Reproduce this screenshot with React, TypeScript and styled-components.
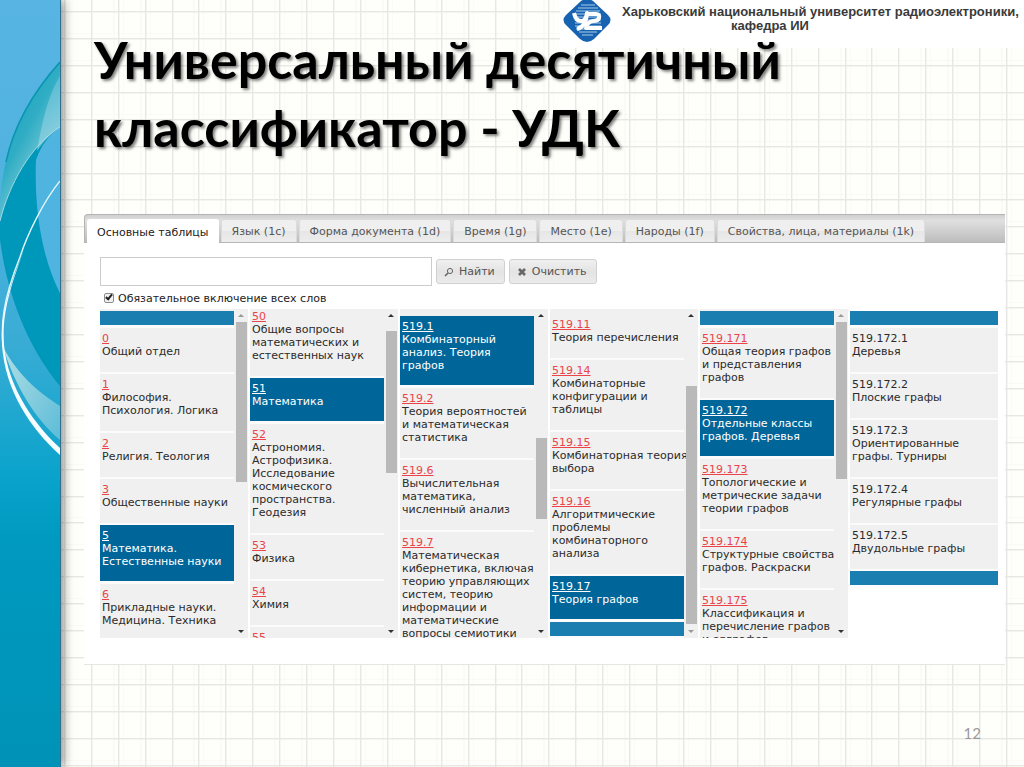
import React from "react";
import styled, { createGlobalStyle } from "styled-components";

const uiFont = `"DejaVu Sans", Verdana, sans-serif`;
const titleFont = `Lato, Carlito, "Open Sans", sans-serif`;

const GlobalStyle = createGlobalStyle`
  *, *::before, *::after { box-sizing: border-box; }
  body { margin: 0; background: #fefefa; }
`;

const Slide = styled.div`
  position: relative;
  display: grid;
  grid-template-columns: 61px minmax(0, 1fr);
  min-height: 100vh;
  overflow: hidden;
`;

const GridPaper = styled.svg`
  position: absolute;
  inset: 0;
  width: 100%;
  height: 100%;
`;

const Ribbon = styled.aside`
  position: relative;
  background: linear-gradient(#58b5e3 0%, #50b2df 25%, #38acd5 45%, #0aa3cb 62%, #0099c0 70%, #0093b7 100%);
  border-right: 1px solid #31708c;
  box-shadow: 2px 0 10px rgba(60, 60, 60, 0.65);
`;

const Waves = styled.svg`
  display: block;
  width: 60px;
  height: 767px;
`;

const Main = styled.main`
  position: relative;
  display: flex;
  flex-direction: column;
  padding: 25px 19px 20px 23px;
`;

const University = styled.header`
  position: absolute;
  top: 0;
  right: 0;
  display: flex;
  gap: 10px;
  width: 464px;
  height: 48px;
  padding-left: 2px;
  background: #fff;
  font: 700 13px/14px "Liberation Sans", Arial, sans-serif;
  color: #3a3a3a;
`;

const Logo = styled.svg`
  flex: none;
  width: 50px;
  height: 44px;
`;

const UniversityName = styled.p`
  margin: 5px 0 0;
  white-space: nowrap;
`;

const Department = styled.span`
  display: block;
  padding-left: 109px;
`;

const Title = styled.h1`
  position: relative;
  margin: 0 0 53px 10px;
  font: 700 52px/68px ${titleFont};
  color: #000;
  text-shadow: 2px 2px 3px rgba(0, 0, 0, 0.5);
`;

const Panel = styled.section`
  background: #fff;
  border-bottom: 1px solid #e6e5e0;
  font: 11px/13px ${uiFont};
  color: #333;
`;

const TabBar = styled.div`
  display: flex;
  gap: 2px;
  height: 29px;
  padding: 4px 0 0 2px;
  background: linear-gradient(#cfcfcf, #e0e0e0 20%, #bdbdbd);
  border: solid #b5b5b5;
  border-width: 1px 0 1px 1px;
  border-top-left-radius: 4px;
`;

const Tab = styled.button<{ $active?: boolean }>`
  height: ${(p) => (p.$active ? 25 : 23)}px;
  padding: 0 ${(p) => (p.$active ? 9 : 10)}px;
  border: 1px solid ${(p) => (p.$active ? "#fff" : "#dcdcdc")};
  border-bottom: 0;
  border-radius: 3px 3px 0 0;
  background: ${(p) => (p.$active ? "#fff" : "linear-gradient(#efefef 50%, #e6e6e6 50%, #ededed)")};
  font: inherit;
  white-space: nowrap;
  color: ${(p) => (p.$active ? "#222" : "#555")};
`;

const TabBody = styled.div`
  padding: 14px 7px 26px 16px;
`;

const SearchRow = styled.form`
  display: flex;
  align-items: center;
  gap: 4px;
`;

const SearchInput = styled.input`
  width: 332px;
  height: 29px;
  padding: 0 6px;
  border: 1px solid #ccc;
  background: #fff;
  font: inherit;
`;

const ActionButton = styled.button`
  display: flex;
  align-items: center;
  gap: 5px;
  height: 25px;
  padding: 0 9px 0 7px;
  border: 1px solid #d0d0d0;
  border-radius: 3px;
  background: linear-gradient(#f0f0f0, #e4e4e4 50%, #ebebeb);
  font: inherit;
  color: #555;
`;

const ButtonIcon = styled.svg`
  width: 10px;
  height: 10px;
`;

const CheckLabel = styled.label`
  display: flex;
  align-items: center;
  gap: 4px;
  height: 23px;
  padding: 2px 0 0 4px;
  color: #222;
`;

const Checkbox = styled.input`
  appearance: none;
  width: 10px;
  height: 10px;
  margin: 0 0 2px;
  border: 1px solid #8c8c8c;
  border-radius: 2px;
  background: #f2f2f2;
  &:checked::after {
    content: "";
    display: block;
    width: 4px;
    height: 7px;
    margin: -1px 0 0 2px;
    border: solid #222;
    border-width: 0 2px 2px 0;
    transform: rotate(40deg);
  }
`;

const Columns = styled.div`
  display: grid;
  grid-template-columns: repeat(6, minmax(0, 1fr));
  gap: 2px;
  height: 329px;
`;

const Column = styled.div<{ $plain?: boolean }>`
  display: flex;
  height: 329px;
  overflow: hidden;
  background: ${(p) => (p.$plain ? "#fff" : "#f0f0f0")};
`;

const List = styled.ul<{ $start: number }>`
  flex: 1;
  min-width: 0;
  margin: ${(p) => p.$start}px 0 0;
  padding: 0;
  list-style: none;
`;

const Edge = styled.li`
  height: 17px;
  background: #1a7eb0;
  border-bottom: 3px solid #fbfbfb;
`;

const Item = styled.li<{ $selected?: boolean }>`
  padding: 4px 0 ${(p) => (p.$selected ? 13 : 14)}px 2px;
  border-bottom: ${(p) => (p.$selected ? 3 : 2)}px solid #fbfbfb;
  background: ${(p) => (p.$selected ? "#069" : "#f0f0f0")};
  color: ${(p) => (p.$selected ? "#fff" : "#2b2b2b")};
`;

const Code = styled.a<{ $selected?: boolean }>`
  color: ${(p) => (p.$selected ? "#fff" : "#ea4448")};
`;

const Name = styled.span`
  display: block;
  white-space: pre;
`;

const Scrollbar = styled.div`
  flex: none;
  display: flex;
  flex-direction: column;
  justify-content: space-between;
  align-items: center;
  width: 14px;
  padding: 5px 0;
`;

const Arrow = styled.svg`
  flex: none;
  width: 6px;
  height: 3px;
`;

const Track = styled.div`
  flex: 1;
  width: 11px;
  margin: 5px 0 4px;
`;

const Thumb = styled.div<{ $top: number; $size: number }>`
  height: ${(p) => p.$size}px;
  margin-top: ${(p) => p.$top}px;
  background: #b9b9b9;
`;

const PageNumber = styled.footer`
  margin-top: 58px;
  padding-right: 24px;
  font: 15px/20px ${titleFont};
  text-align: right;
  color: #999;
`;

type Entry = { code: string; name: string; selected?: boolean; leaf?: boolean };
type ColumnData = {
  start: number;
  first?: boolean;
  last?: boolean;
  thumb?: [number, number];
  items: Entry[];
};

const columns: ColumnData[] = [
  {
    start: 2,
    first: true,
    thumb: [0, 160],
    items: [
      { code: "0", name: "Общий отдел" },
      { code: "1", name: "Философия.\nПсихология. Логика" },
      { code: "2", name: "Религия. Теология" },
      { code: "3", name: "Общественные науки" },
      { code: "5", name: "Математика.\nЕстественные науки", selected: true },
      { code: "6", name: "Прикладные науки.\nМедицина. Техника" },
    ],
  },
  {
    start: -3,
    thumb: [9, 142],
    items: [
      { code: "50", name: "Общие вопросы\nматематических и\nестественных наук" },
      { code: "51", name: "Математика", selected: true },
      { code: "52", name: "Астрономия.\nАстрофизика.\nИсследование\nкосмического\nпространства.\nГеодезия" },
      { code: "53", name: "Физика" },
      { code: "54", name: "Химия" },
      { code: "55", name: "Науки о Земле" },
    ],
  },
  {
    start: 7,
    thumb: [116, 81],
    items: [
      { code: "519.1", name: "Комбинаторный\nанализ. Теория\nграфов", selected: true },
      { code: "519.2", name: "Теория вероятностей\nи математическая\nстатистика" },
      { code: "519.6", name: "Вычислительная\nматематика,\nчисленный анализ" },
      { code: "519.7", name: "Математическая\nкибернетика, включая\nтеорию управляющих\nсистем, теорию\nинформации и\nматематические\nвопросы семиотики" },
    ],
  },
  {
    start: 5,
    last: true,
    thumb: [64, 238],
    items: [
      { code: "519.11", name: "Теория перечисления" },
      { code: "519.14", name: "Комбинаторные\nконфигурации и\nтаблицы" },
      { code: "519.15", name: "Комбинаторная теория\nвыбора" },
      { code: "519.16", name: "Алгоритмические\nпроблемы\nкомбинаторного\nанализа" },
      { code: "519.17", name: "Теория графов", selected: true },
    ],
  },
  {
    start: 2,
    first: true,
    thumb: [0, 157],
    items: [
      { code: "519.171", name: "Общая теория графов\nи представления\nграфов" },
      { code: "519.172", name: "Отдельные классы\nграфов. Деревья", selected: true },
      { code: "519.173", name: "Топологические и\nметрические задачи\nтеории графов" },
      { code: "519.174", name: "Структурные свойства\nграфов. Раскраски" },
      { code: "519.175", name: "Классификация и\nперечисление графов\nи орграфов" },
    ],
  },
  {
    start: 2,
    first: true,
    last: true,
    items: [
      { code: "519.172.1", name: "Деревья", leaf: true },
      { code: "519.172.2", name: "Плоские графы", leaf: true },
      { code: "519.172.3", name: "Ориентированные\nграфы. Турниры", leaf: true },
      { code: "519.172.4", name: "Регулярные графы", leaf: true },
      { code: "519.172.5", name: "Двудольные графы", leaf: true },
    ],
  },
];

const tabs = [
  "Основные таблицы",
  "Язык (1c)",
  "Форма документа (1d)",
  "Время (1g)",
  "Место (1e)",
  "Народы (1f)",
  "Свойства, лица, материалы (1k)",
];

const CELL = 26.92;
const steps = Array.from({ length: 90 }, (_, i) => i);

function Paper() {
  return (
    <GridPaper aria-hidden="true">
      {steps.map((i) => {
        const x = Math.round(10 + i * CELL);
        const y = Math.round(11 + i * CELL);
        return (
          <g key={i} fill="#e7e7e3">
            <rect x={x} y="0" width="1" height="100%" />
            <rect x="0" y={y} width="100%" height="1" />
            <rect x={x + 1} y="0" width="1" height="100%" opacity="0.4" />
            <rect x="0" y={y + 1} width="100%" height="1" opacity="0.4" />
            {i % 3 !== 0 && (
              <g opacity="0.16">
                <rect x={x - 5} y="0" width="2" height="100%" />
                <rect x={x + 5} y="0" width="1" height="100%" />
                <rect x="0" y={y - 5} width="100%" height="1" />
              </g>
            )}
          </g>
        );
      })}
    </GridPaper>
  );
}

function RibbonArt() {
  return (
    <Waves viewBox="0 0 60 767" aria-hidden="true">
      <defs>
        <linearGradient id="leaf" x1="0" y1="0" x2="0.7" y2="1">
          <stop offset="0" stopColor="#0d9fbd" />
          <stop offset="0.5" stopColor="#30adc4" />
          <stop offset="1" stopColor="#b5e0e6" />
        </linearGradient>
        <linearGradient id="pale" x1="0" y1="0" x2="0" y2="1">
          <stop offset="0" stopColor="#6fc3dc" />
          <stop offset="1" stopColor="#9bd6e4" />
        </linearGradient>
        <linearGradient id="fin" x1="0" y1="0" x2="1" y2="1">
          <stop offset="0" stopColor="#b2dfe5" />
          <stop offset="1" stopColor="#5cbcd8" />
        </linearGradient>
      </defs>
      <path d="M60 127C32 142 12 172 0 222V240C8 300 30 350 60 386V293C45 260 35 215 36 160Z" fill="#0098ba" />
      <path d="M36 160C34 210 42 258 60 293V127C50 134 41 145 36 160Z" fill="#4fb4df" />
      <path d="M60 62C34 91 14 124 5 165C1 185 0 200 0 220C9 185 30 146 60 127Z" fill="url(#leaf)" />
      <path d="M60 76C47 98 43 120 37 151C44 141 52 132 60 127Z" fill="url(#pale)" opacity="0.65" />
      <path d="M60 62C34 91 14 124 6 162" fill="none" stroke="#0795b0" strokeWidth="1.5" />
      <path d="M0 221C9 185 30 146 60 127" fill="none" stroke="#b9e5eb" strokeWidth="0.8" />
      <path d="M3 347C18 375 38 392 60 406V440C35 419 15 386 3 347Z" fill="url(#fin)" />
      <path d="M60 181C43 202 27 235 20 257C2 302 1 326 3 347" fill="none" stroke="#e2f7fb" strokeWidth="1.4" />
      <path d="M24 250C6 294 1 318 2 345C5 390 30 428 60 455V448C35 425 8 388 4 345C2 318 8 292 24 250Z" fill="#f6fdff" />
    </Waves>
  );
}

function UniversityLogo() {
  return (
    <Logo viewBox="0 0 50 44" role="img" aria-label="ХНУРЭ">
      <path d="M19 1Q25 -3 31 1L46 15Q51 20 46 25L32 39Q25 45 18 39L4 25Q-1 20 4 15Z" fill="#1763b1" />
      <g stroke="#a9cdec" strokeWidth="1.2">
        <path d="M19 5H33M16 8H36M14 11H38M13 14H39M13 17H39M13 20H39M13 23H39M13 26H39M14 29H38M17 32H35M20 35H31" />
      </g>
      <g fill="none" stroke="#fff" strokeWidth="4" strokeLinejoin="round">
        <path d="M12 13Q14 22 20 21Q24 20 25 13Q24 27 15 29" />
        <path d="M25 14H34Q38 14 37 18Q36 21 31 21Q25 22 24 28H40" />
      </g>
    </Logo>
  );
}

function ScrollArrow({ down, dim }: { down?: boolean; dim?: boolean }) {
  return (
    <Arrow viewBox="0 0 6 3" aria-hidden="true">
      <path d={down ? "M0 0H6L3 3Z" : "M0 3H6L3 0Z"} fill={dim ? "#999" : "#333"} />
    </Arrow>
  );
}

function ClassColumn({ data }: { data: ColumnData }) {
  return (
    <Column $plain={!data.thumb}>
      <List $start={data.start}>
        {data.first && <Edge />}
        {data.items.map((it) => (
          <Item key={it.code} $selected={it.selected}>
            {it.leaf ? it.code : <Code href={"#" + it.code} $selected={it.selected}>{it.code}</Code>}
            <Name>{it.name}</Name>
          </Item>
        ))}
        {data.last && <Edge />}
      </List>
      {data.thumb && (
        <Scrollbar>
          <ScrollArrow dim={data.first} />
          <Track>
            <Thumb $top={data.thumb[0]} $size={data.thumb[1]} />
          </Track>
          <ScrollArrow down dim={data.last} />
        </Scrollbar>
      )}
    </Column>
  );
}

export default function App() {
  return (
    <>
      <GlobalStyle />
      <Slide>
        <Paper />
        <Ribbon>
          <RibbonArt />
        </Ribbon>
        <Main>
          <University>
            <UniversityLogo />
            <UniversityName>
              Харьковский национальный университет радиоэлектроники,
              <Department>кафедра ИИ</Department>
            </UniversityName>
          </University>
          <Title>
            Универсальный десятичный
            <br />
            классификатор - УДК
          </Title>
          <Panel>
            <TabBar role="tablist">
              {tabs.map((t, i) => (
                <Tab key={t} type="button" role="tab" aria-selected={i === 0} $active={i === 0}>
                  {t}
                </Tab>
              ))}
            </TabBar>
            <TabBody>
              <SearchRow onSubmit={(e) => e.preventDefault()}>
                <SearchInput type="text" aria-label="Поиск" />
                <ActionButton type="submit">
                  <ButtonIcon viewBox="0 0 10 10" fill="none" stroke="#666" aria-hidden="true">
                    <circle cx="6" cy="4" r="2.6" />
                    <path d="M4 6L1 9" strokeWidth="1.6" />
                  </ButtonIcon>
                  Найти
                </ActionButton>
                <ActionButton type="reset">
                  <ButtonIcon viewBox="0 0 10 10" fill="none" stroke="#666" aria-hidden="true">
                    <path d="M2 2L8 8M8 2L2 8" strokeWidth="2.6" />
                  </ButtonIcon>
                  Очистить
                </ActionButton>
              </SearchRow>
              <CheckLabel>
                <Checkbox type="checkbox" defaultChecked />
                Обязательное включение всех слов
              </CheckLabel>
              <Columns>
                {columns.map((c) => (
                  <ClassColumn key={c.items[0].code} data={c} />
                ))}
              </Columns>
            </TabBody>
          </Panel>
          <PageNumber>12</PageNumber>
        </Main>
      </Slide>
    </>
  );
}
